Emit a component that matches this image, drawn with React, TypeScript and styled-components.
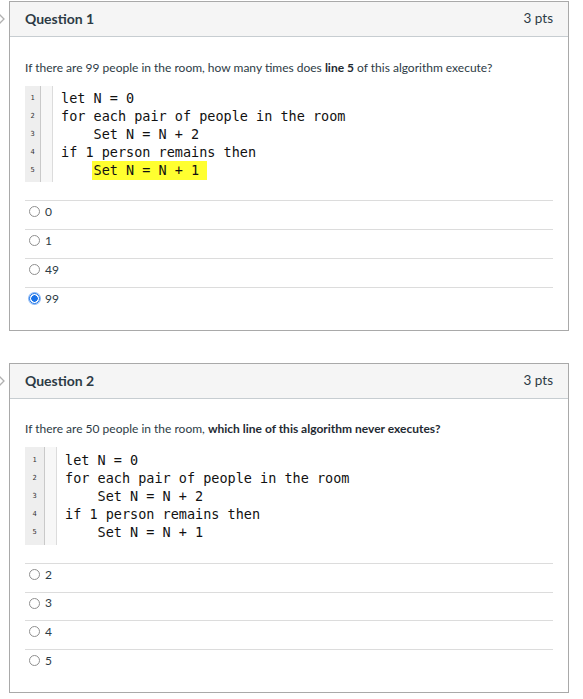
import React from "react";
import styled, { createGlobalStyle } from "styled-components";

const GlobalStyle = createGlobalStyle`
  html, body { margin: 0; padding: 0; background: #fff; }
  body { font-family: Lato, "Open Sans", "Liberation Sans", sans-serif; color: #2d3b45; }
  * { box-sizing: border-box; }
`;

const Page = styled.div`
  display: flex;
  flex-direction: column;
  gap: 32px;
  padding: 1px 0 0 9px;
`;

const Card = styled.section`
  position: relative;
  width: 560px;
  border: 1px solid #a9a9a9;
  background: #fff;
`;

const Marker = styled.span`
  position: absolute;
  left: -17px;
  top: 11px;
  width: 12px;
  height: 12px;
  display: flex;
`;

const Header = styled.header`
  display: flex;
  align-items: center;
  justify-content: space-between;
  height: 35px;
  padding: 0 15px 2px;
  background: #f5f5f5;
  border-bottom: 1px solid #c7cdd1;
`;

const Title = styled.h2`
  margin: 0;
  font-size: 14px;
  font-weight: 700;
  color: #2d3b45;
`;

const Points = styled.span`
  font-size: 13.5px;
  color: #2d3b45;
`;

const Body = styled.div<{ $top: number }>`
  padding: ${(p) => p.$top}px 15px 14px;
`;

const Prompt = styled.p`
  margin: 0;
  font-size: 12px;
  line-height: 18px;
  b { font-weight: 700; color: #1f2b33; }
`;

const CodeBlock = styled.div<{ $pad: number }>`
  display: flex;
  margin-top: 9px;
  font-family: "DejaVu Sans Mono", "Liberation Mono", monospace;
  --pad: ${(p) => p.$pad}px;
`;

const Numbers = styled.div<{ $w: number }>`
  width: ${(p) => p.$w}px;
  padding: var(--pad) 0;
  background: #eeeeee;
  border-right: 1px solid #c9c9c9;
  display: flex;
  flex-direction: column;
  align-items: center;
`;

const Num = styled.span`
  height: 18px;
  line-height: 18px;
  font-size: 7px;
  color: #333;
`;

const Spacer = styled.div`
  width: 12px;
  background: #f7f7f7;
  border-right: 1px solid #dcdcdc;
`;

const Code = styled.div`
  padding: var(--pad) 8px;
  display: flex;
  flex-direction: column;
`;

const CodeLine = styled.span`
  height: 18px;
  line-height: 18px;
  font-size: 13.5px;
  white-space: pre;
  color: #111;
`;

const Mark = styled.span`
  display: inline-block;
  height: 19px;
  line-height: 19px;
  margin-left: -2px;
  padding: 0 8px 0 2px;
  background: #ffff30;
`;

const Options = styled.div`
  margin-top: 18px;
  display: flex;
  flex-direction: column;
`;

const Option = styled.label<{ $h: number }>`
  display: flex;
  align-items: center;
  height: ${(p) => p.$h}px;
  padding-bottom: ${(p) => p.$h - 22}px;
  border-top: 1px solid #dcdcdc;
  font-size: 12px;
  line-height: 16px;
  color: #2d3b45;
`;

const Radio = styled.input`
  appearance: none;
  width: 11px;
  height: 11px;
  margin: 0 5px 0 4px;
  border: 1px solid #8f8f8f;
  border-radius: 50%;
  background: #fff;
  &:checked {
    border-color: #1a73e8;
    background: radial-gradient(circle, #1a73e8 0 3px, #fff 3.5px);
    box-shadow: 0 0 0 1px #8ab8f5;
  }
`;

type Q = {
  n: number;
  prompt: React.ReactNode;
  code: string[];
  highlight?: number;
  options: string[];
  selected?: string;
  numW: number;
  pad: number;
  rowH: number;
  top: number;
};

const questions: Q[] = [
  {
    n: 1,
    prompt: (
      <>
        If there are 99 people in the room, how many times does <b>line 5</b> of this algorithm execute?
      </>
    ),
    code: ["let N = 0", "for each pair of people in the room", "    Set N = N + 2", "if 1 person remains then", "    Set N = N + 1"],
    highlight: 4,
    options: ["0", "1", "49", "99"],
    selected: "99",
    numW: 16,
    pad: 3,
    rowH: 29,
    top: 22,
  },
  {
    n: 2,
    prompt: (
      <>
        If there are 50 people in the room, <b>which line of this algorithm never executes?</b>
      </>
    ),
    code: ["let N = 0", "for each pair of people in the room", "    Set N = N + 2", "if 1 person remains then", "    Set N = N + 1"],
    options: ["2", "3", "4", "5"],
    numW: 20,
    pad: 4,
    rowH: 28.7,
    top: 21,
  },
];

function Question({ q }: { q: Q }) {
  return (
    <Card>
      <Marker>
        <svg width="12" height="12" viewBox="0 0 12 12">
          <path d="M6 1 L11 6 L6 11 L1 6 Z" fill="none" stroke="#b0b0b0" strokeWidth="1.3" />
        </svg>
      </Marker>
      <Header>
        <Title>Question {q.n}</Title>
        <Points>3 pts</Points>
      </Header>
      <Body $top={q.top}>
        <Prompt>{q.prompt}</Prompt>
        <CodeBlock $pad={q.pad}>
          <Numbers $w={q.numW}>
            {q.code.map((_, i) => (
              <Num key={i}>{i + 1}</Num>
            ))}
          </Numbers>
          <Spacer />
          <Code>
            {q.code.map((line, i) => {
              if (i === q.highlight) {
                const m = line.match(/^(\s*)(.*)$/)!;
                return (
                  <CodeLine key={i}>
                    {m[1]}
                    <Mark>{m[2]}</Mark>
                  </CodeLine>
                );
              }
              return <CodeLine key={i}>{line}</CodeLine>;
            })}
          </Code>
        </CodeBlock>
        <Options>
          {q.options.map((o) => (
            <Option key={o} $h={q.rowH}>
              <Radio type="radio" name={`q${q.n}`} defaultChecked={o === q.selected} />
              {o}
            </Option>
          ))}
        </Options>
      </Body>
    </Card>
  );
}

export default function App() {
  return (
    <>
      <GlobalStyle />
      <Page>
        {questions.map((q) => (
          <Question key={q.n} q={q} />
        ))}
      </Page>
    </>
  );
}
